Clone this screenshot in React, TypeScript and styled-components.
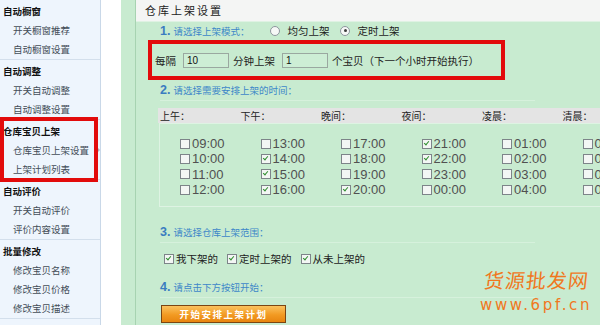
import styled, { createGlobalStyle } from "styled-components";

const GlobalStyle = createGlobalStyle`
  html, body {
    margin: 0;
    padding: 0;
    width: 600px;
    height: 325px;
    overflow: hidden;
    background: #ffffff;
  }
  body {
    font-family: "Liberation Sans", "Noto Sans CJK SC", sans-serif;
  }
`;

type Group = {
  title: string
  items: string[]
  marked?: boolean
}

const groups: Group[] = [
  { title: "自动橱窗", items: ["开关橱窗推荐", "自动橱窗设置"] },
  { title: "自动调整", items: ["开关自动调整", "自动调整设置"] },
  { title: "仓库宝贝上架", items: ["仓库宝贝上架设置", "上架计划列表"], marked: true },
  { title: "自动评价", items: ["开关自动评价", "评价内容设置"] },
  { title: "批量修改", items: ["修改宝贝名称", "修改宝贝价格", "修改宝贝描述"] },
];

const periods = [
  { label: "上午：", times: ["09:00", "10:00", "11:00", "12:00"], checked: [] as number[] },
  { label: "下午：", times: ["13:00", "14:00", "15:00", "16:00"], checked: [1, 2, 3] },
  { label: "晚间：", times: ["17:00", "18:00", "19:00", "20:00"], checked: [3] },
  { label: "夜间：", times: ["21:00", "22:00", "23:00", "00:00"], checked: [0, 1] },
  { label: "凌晨：", times: ["01:00", "02:00", "03:00", "04:00"], checked: [] },
  { label: "清晨：", times: ["05:00", "06:00", "07:00", "08:00"], checked: [] },
];

const ranges = ["我下架的", "定时上架的", "从未上架的"];

export default function App() {
  return (
    <>
      <GlobalStyle />
      <Page>
        <Sidebar>
          {groups.map((g) => (
            <MenuGroup key={g.title} $marked={g.marked}>
              <GroupTitle>{g.title}</GroupTitle>
              {g.items.map((item, i) => (
                <MenuItem key={item}>
                  {item}
                  {g.marked && i === 0 && <Arrow />}
                </MenuItem>
              ))}
            </MenuGroup>
          ))}
        </Sidebar>
        <Spacer />
        <Frame>
          <Panel>
            <PanelHeader>仓库上架设置</PanelHeader>

            <StepRow $height={17} $line={false}>
              <StepNum>1.</StepNum>
              <StepText>请选择上架模式：</StepText>
              <RadioOption $gap={21}>
                <Radio />
                均匀上架
              </RadioOption>
              <RadioOption $gap={11}>
                <Radio $on />
                定时上架
              </RadioOption>
            </StepRow>

            <IntervalBox>
              <Plain>每隔</Plain>
              <NumInput value="10" readOnly />
              <Plain>分钟上架</Plain>
              <NumInput value="1" readOnly />
              <Plain>个宝贝（下一个小时开始执行）</Plain>
            </IntervalBox>

            <StepRow $height={20}>
              <StepNum>2.</StepNum>
              <StepText>请选择需要安排上架的时间：</StepText>
            </StepRow>

            <TimeTable>
              <TableHead>
                {periods.map((p) => (
                  <HeadCell key={p.label}>{p.label}</HeadCell>
                ))}
              </TableHead>
              <TableBody>
                {periods.map((p) => (
                  <TimeColumn key={p.label}>
                    {p.times.map((t, i) => (
                      <TimeItem key={t}>
                        <Check $on={p.checked.includes(i)} />
                        {t}
                      </TimeItem>
                    ))}
                  </TimeColumn>
                ))}
              </TableBody>
            </TimeTable>

            <StepRow $height={20} $top={15}>
              <StepNum>3.</StepNum>
              <StepText>请选择仓库上架范围：</StepText>
            </StepRow>

            <RangeRow>
              {ranges.map((r) => (
                <RangeItem key={r}>
                  <Check $on />
                  {r}
                </RangeItem>
              ))}
            </RangeRow>

            <StepRow $height={20}>
              <StepNum>4.</StepNum>
              <StepText>请点击下方按钮开始：</StepText>
            </StepRow>

            <StartButton>开始安排上架计划</StartButton>

            <Watermark>
              <MarkTitle>货源批发网</MarkTitle>
              <MarkUrl>www.6pf.cn</MarkUrl>
            </Watermark>
          </Panel>
        </Frame>
      </Page>
    </>
  );
}

const Page = styled.div`
  display: flex;
  width: 600px;
  height: 325px;
  overflow: hidden;
`;

const Sidebar = styled.div`
  width: 100px;
  flex-shrink: 0;
  background: #eef5fd;
  border-right: 1px solid #c9d8e8;
`;

const MenuGroup = styled.div<{ $marked?: boolean }>`
  position: relative;
  padding: 2px 0 1px;
  border-bottom: 1px solid #d3dfec;

  ${(p) =>
    p.$marked &&
    `
    &::after {
      content: "";
      position: absolute;
      left: 0;
      right: 2px;
      top: -3px;
      bottom: -3px;
      border: 4px solid #e20b0b;
      pointer-events: none;
    }
  `}
`;

const GroupTitle = styled.div`
  height: 18px;
  line-height: 18px;
  padding-left: 3px;
  font-family: "Noto Sans CJK SC", sans-serif;
  font-size: 9.5px;
  font-weight: 700;
  color: #111;
`;

const MenuItem = styled.div`
  display: flex;
  align-items: center;
  height: 19px;
  padding-left: 13px;
  font-family: "Noto Sans CJK SC", sans-serif;
  font-size: 9.5px;
  color: #434d58;
`;

const Arrow = styled.span`
  margin-left: 8px;
  width: 0;
  height: 0;
  border-top: 3px solid transparent;
  border-bottom: 3px solid transparent;
  border-left: 3px solid #a9b2bc;
`;

const Spacer = styled.div`
  width: 20px;
  flex-shrink: 0;
  background: #ffffff;
`;

const Frame = styled.div`
  flex: 1;
  min-width: 0;
  padding-left: 14px;
  background: #c8ebd0;
  overflow: hidden;
`;

const Panel = styled.div`
  position: relative;
  height: 100%;
  border-left: 1px solid #a7d3b1;
  background: #c8ebd0;
`;

const PanelHeader = styled.div`
  height: 21px;
  line-height: 21px;
  padding-left: 9px;
  background: #f4f5f4;
  border-bottom: 1px solid #dff2e3;
  font-family: "Noto Sans CJK SC", sans-serif;
  font-size: 11px;
  letter-spacing: 2px;
  color: #222;
`;

const StepRow = styled.div<{ $height: number; $top?: number; $line?: boolean }>`
  display: flex;
  align-items: center;
  width: 375px;
  height: ${(p) => p.$height}px;
  margin: ${(p) => p.$top ?? 0}px 0 0 24px;
  border-bottom: 1px solid ${(p) => (p.$line === false ? "transparent" : "#d6f1dc")};
`;

const StepNum = styled.span`
  font-family: "Liberation Sans", sans-serif;
  font-size: 12.5px;
  font-weight: 700;
  color: #3a7cc0;
  margin-right: 3px;
`;

const StepText = styled.span`
  font-family: "Noto Sans CJK SC", sans-serif;
  font-size: 9.5px;
  color: #3d87c8;
`;

const RadioOption = styled.span<{ $gap: number }>`
  display: inline-flex;
  align-items: center;
  margin-left: ${(p) => p.$gap}px;
  font-family: "Noto Sans CJK SC", sans-serif;
  font-size: 10.5px;
  color: #222;
`;

const Radio = styled.span<{ $on?: boolean }>`
  position: relative;
  width: 8px;
  height: 8px;
  margin-right: 7px;
  border: 1px solid #8e969e;
  border-radius: 50%;
  background: #f6f8f7;

  ${(p) =>
    p.$on &&
    `
    &::after {
      content: "";
      position: absolute;
      left: 2.5px;
      top: 2.5px;
      width: 3px;
      height: 3px;
      border-radius: 50%;
      background: #3c3c3c;
    }
  `}
`;

const IntervalBox = styled.div`
  display: flex;
  align-items: center;
  width: 346px;
  height: 32px;
  margin-left: 12px;
  padding-left: 3px;
  border: 4px solid #e20b0b;
`;

const Plain = styled.span`
  font-family: "Noto Sans CJK SC", sans-serif;
  font-size: 10.5px;
  color: #222;
`;

const NumInput = styled.input`
  width: 46px;
  height: 15px;
  margin: 0 4px 0 7px;
  padding: 0 3px;
  box-sizing: border-box;
  border: 1px solid #9aa8a0;
  background: #cdeed5;
  font-family: "Liberation Sans", sans-serif;
  font-size: 10px;
  color: #111;
  outline: none;
`;

const TimeTable = styled.div`
  width: 483px;
  margin: 7px 0 0 22px;
`;

const TableHead = styled.div`
  display: grid;
  grid-template-columns: repeat(6, 80.5px);
  height: 15px;
  background: #e4e4e4;
`;

const HeadCell = styled.div`
  padding-left: 2px;
  line-height: 15px;
  font-family: "Noto Sans CJK SC", sans-serif;
  font-size: 10px;
  color: #222;
`;

const TableBody = styled.div`
  display: grid;
  grid-template-columns: repeat(6, 80.5px);
  padding: 12px 0 9px;
  border: 1px solid #def3e3;
  border-right: none;
  margin-left: 1px;
`;

const TimeColumn = styled.div`
  display: flex;
  flex-direction: column;
  padding-left: 20px;
`;

const TimeItem = styled.div`
  display: flex;
  align-items: center;
  height: 15.3px;
  font-family: "Liberation Sans", sans-serif;
  font-size: 13px;
  color: #505050;
`;

const Check = styled.span<{ $on?: boolean }>`
  position: relative;
  width: 8px;
  height: 8px;
  flex-shrink: 0;
  margin-right: 2px;
  border: 1px solid #7d8489;
  background: #f3f6f4;

  ${(p) =>
    p.$on &&
    `
    &::after {
      content: "";
      position: absolute;
      left: 2px;
      top: 0px;
      width: 2px;
      height: 4px;
      border: solid #2f8f2f;
      border-width: 0 1.5px 1.5px 0;
      transform: rotate(40deg);
    }
  `}
`;

const RangeRow = styled.div`
  display: flex;
  align-items: center;
  height: 15px;
  padding: 8px 0 11px 28px;
`;

const RangeItem = styled.span`
  display: inline-flex;
  align-items: center;
  margin-right: 9px;
  font-family: "Noto Sans CJK SC", sans-serif;
  font-size: 10.5px;
  color: #222;
`;

const StartButton = styled.button`
  display: block;
  width: 125px;
  height: 18px;
  margin: 7px 0 0 25px;
  padding: 0;
  border: 1px solid #7b4512;
  background: linear-gradient(#fbc25e, #f29a22 55%, #e8850f);
  font-family: "Noto Sans CJK SC", sans-serif;
  font-size: 9.5px;
  font-weight: 700;
  letter-spacing: 1.5px;
  color: #ffffff;
`;

const Watermark = styled.div`
  position: absolute;
  right: 8px;
  bottom: 11px;
  display: flex;
  flex-direction: column;
  align-items: center;
  color: #f0781e;
  pointer-events: none;
`;

const MarkTitle = styled.div`
  font-family: "Noto Sans CJK SC", sans-serif;
  font-size: 20px;
  line-height: 28px;
  letter-spacing: 1px;
  transform: skewX(-6deg);
`;

const MarkUrl = styled.div`
  margin-top: 3px;
  font-family: "DejaVu Sans", sans-serif;
  font-size: 15px;
  line-height: 17px;
  letter-spacing: 2.6px;
`;
